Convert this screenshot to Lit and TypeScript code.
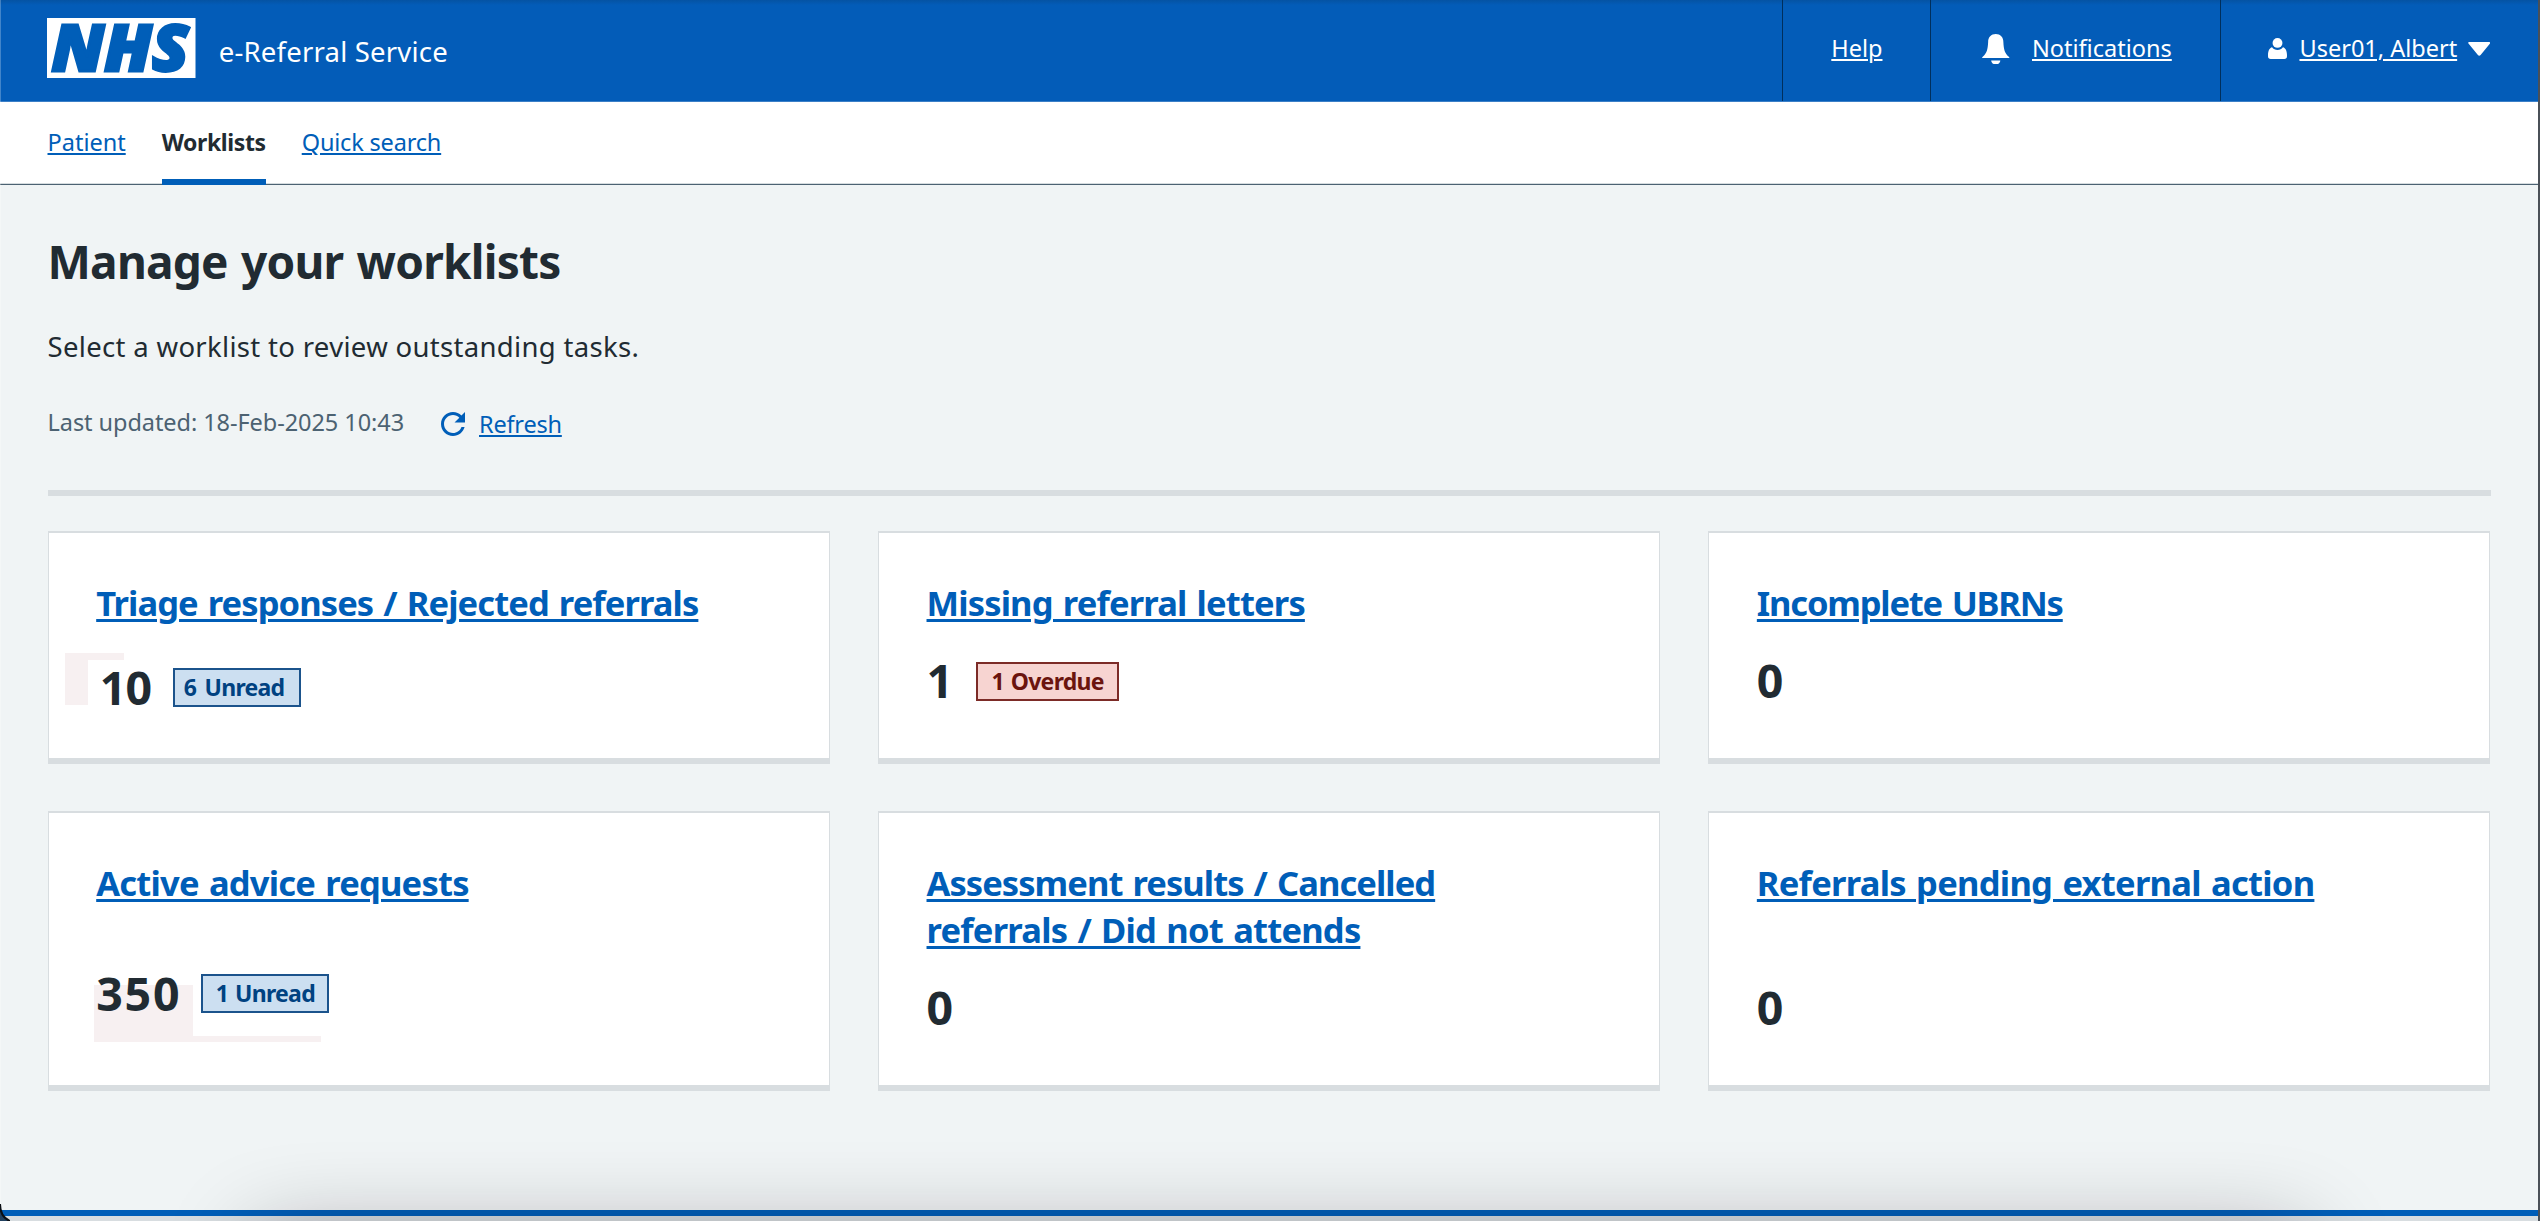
import { LitElement, html, css, svg, nothing } from "lit";
import { customElement, property } from "lit/decorators.js";
import { classMap } from "lit/directives/class-map.js";
import { styleMap } from "lit/directives/style-map.js";

interface Badge {
  label: string;
  kind: "unread" | "overdue";
}

interface Worklist {
  id: string;
  title: string[];
  /* letter-spacing for each title line, in pixels */
  tracking: number[];
  count: number;
  badge?: Badge;
}

const WORKLISTS: Worklist[] = [
  { id: "triage", title: ["Triage responses / Rejected referrals"], tracking: [-0.91], count: 10, badge: { label: "6 Unread", kind: "unread" } },
  { id: "missing", title: ["Missing referral letters"], tracking: [-0.84], count: 1, badge: { label: "1 Overdue", kind: "overdue" } },
  { id: "incomplete", title: ["Incomplete UBRNs"], tracking: [-1.2], count: 0 },
  { id: "advice", title: ["Active advice requests"], tracking: [-0.79], count: 350, badge: { label: "1 Unread", kind: "unread" } },
  { id: "assessment", title: ["Assessment results / Cancelled", "referrals / Did not attends"], tracking: [-0.94, -0.78], count: 0 },
  { id: "pending", title: ["Referrals pending external action"], tracking: [-0.73], count: 0 },
];

@customElement("worklist-card")
export class WorklistCard extends LitElement {
  @property({ attribute: false }) item!: Worklist;

  static styles = css`
    :host {
      display: block;
    }
    .card {
      position: relative;
      box-sizing: border-box;
      height: 100%;
      display: flex;
      flex-direction: column;
      padding: 46px 40px 50px 47.7px;
      background: #fff;
      border: 1px solid #d8dde0;
      border-top-width: 2px;
      border-bottom-width: 6px;
    }
    .title {
      margin: 0;
      font-size: 34.5px;
      line-height: 47px;
      font-weight: 700;
      word-spacing: 2px;
    }
    .link {
      color: #005eb8;
      white-space: nowrap;
      text-decoration: underline;
      text-decoration-thickness: 3px;
      text-underline-offset: 3px;
    }
    .line {
      display: block;
    }
    .row {
      position: relative;
      display: flex;
      align-items: center;
      height: 56px;
      margin-top: auto;
    }
    .count {
      font-size: 46.5px;
      line-height: 56px;
      font-weight: 700;
      color: #212b32;
    }
    .badge {
      box-sizing: border-box;
      width: 128px;
      height: 39px;
      border: 2px solid #1b538c;
      background: #ccdff1;
      color: #004281;
      font-size: 23px;
      line-height: 35px;
      font-weight: 700;
      letter-spacing: -0.7px;
      word-spacing: 1.5px;
      text-align: center;
      white-space: nowrap;
    }
    .overdue {
      width: 142.5px;
      border-color: #7c2b27;
      background: #f7d4d1;
      color: #6b140e;
      margin: 3px 0 0 23.3px;
    }
    .triage .row {
      margin: auto 0 -7px 3.5px;
    }
    .triage .count {
      letter-spacing: -0.8px;
    }
    .triage .badge {
      margin: 0 0 0 21.3px;
      word-spacing: 3px;
      padding-right: 5px;
    }
    .advice .row {
      margin-bottom: 14px;
    }
    .advice .count {
      letter-spacing: 1.8px;
    }
    .advice .badge {
      margin-left: 20px;
    }
    .patch {
      position: absolute;
      background: #f7f0f1;
    }
    .patch-a {
      left: 16px;
      top: 120px;
      width: 23px;
      height: 52px;
    }
    .patch-b {
      left: 16px;
      top: 120px;
      width: 59px;
      height: 7px;
    }
    .patch-c {
      left: 45px;
      top: 172px;
      width: 99px;
      height: 57px;
    }
    .patch-d {
      left: 45px;
      top: 223px;
      width: 227px;
      height: 6px;
    }
  `;

  render() {
    const { id, title, tracking, count, badge } = this.item;
    return html`
      <section class=${classMap({ card: true, [id]: true })}>
        ${id === "triage" ? html`<span class="patch patch-a"></span><span class="patch patch-b"></span>` : nothing}
        ${id === "advice" ? html`<span class="patch patch-c"></span><span class="patch patch-d"></span>` : nothing}
        <h2 class="title">
          ${title.map(
            (t, i) => html`<span class="line"><a class="link" style=${styleMap({ letterSpacing: `${tracking[i]}px` })}>${t}</a></span>`
          )}
        </h2>
        <div class="row">
          <span class="count">${count}</span>
          ${badge ? html`<span class=${classMap({ badge: true, [badge.kind]: true })}>${badge.label}</span>` : nothing}
        </div>
      </section>
    `;
  }
}

const bell = svg`<path d="M40.5 0C27 0 18 9 18 24C17 45 14 57 2 67Q0 69 0 71H81Q81 69 79 67C67 57 64 45 63 24C63 9 54 0 40.5 0Z"/><path d="M27 78H54C54 84 48 90 40.5 90S27 84 27 78Z"/>`;
const person = svg`<circle cx="28" cy="14.5" r="14.5"/><path d="M12 27A19.5 19.5 0 0 0 44 27C52 29 56 38 56 50V54Q56 62 48 62H8Q0 62 0 54V50C0 38 4 29 12 27Z"/>`;
const refresh = svg`<path d="M17.65 6.35C16.2 4.9 14.21 4 12 4c-4.42 0-7.99 3.58-7.99 8s3.57 8 7.99 8c3.73 0 6.84-2.55 7.73-6h-2.08c-.82 2.33-3.04 4-5.65 4-3.31 0-6-2.69-6-6s2.69-6 6-6c1.66 0 3.14.69 4.22 1.78L13 11h7V4l-2.35 2.35z"/>`;

@customElement("app-root")
export class AppRoot extends LitElement {
  static styles = css`
    :host {
      display: block;
      font-family: "Noto Sans", "Open Sans", sans-serif;
      color: #212b32;
    }
    .page {
      position: relative;
      box-sizing: border-box;
      width: 2540px;
      height: 1221px;
      overflow: hidden;
      display: flex;
      flex-direction: column;
      background: #f0f4f5;
    }
    .header {
      flex: none;
      box-sizing: border-box;
      height: 102px;
      display: flex;
      align-items: flex-start;
      background: linear-gradient(#0553a3 0, #035cb8 5px);
      border-bottom: 1px solid #3b7fc7;
      color: #fff;
    }
    .logo {
      width: 148.5px;
      height: 60px;
      margin: 18px 0 0 47px;
      overflow: visible;
    }
    .logo-box {
      fill: #fff;
    }
    .logo-text {
      font-family: "Noto Sans", "Open Sans", sans-serif;
      font-weight: 900;
      font-style: italic;
      font-size: 64.5px;
      fill: #005eb8;
      stroke: #005eb8;
      stroke-width: 2.8px;
    }
    .service {
      margin: 34px auto 0 23.3px;
      font-size: 27.5px;
      line-height: 36px;
      letter-spacing: 0.2px;
    }
    .cell {
      box-sizing: border-box;
      height: 101px;
      padding-top: 31.5px;
      display: flex;
      align-items: flex-start;
      border-left: 1px solid #002f5c;
      font-size: 23.5px;
      line-height: 32px;
      white-space: nowrap;
    }
    .link {
      color: #005eb8;
      text-decoration: underline;
      text-decoration-thickness: 2px;
      text-underline-offset: 2px;
    }
    .cell .link {
      color: #fff;
    }
    .icon {
      display: block;
      flex: none;
      fill: currentColor;
    }
    .help {
      width: 148px;
      padding-left: 48.8px;
    }
    .notifications {
      width: 290.5px;
      padding-left: 51.5px;
    }
    .bell {
      width: 27.5px;
      height: 30.5px;
      margin: 2.2px 22.5px 0 0;
    }
    .user {
      width: 320px;
      padding-left: 47.3px;
    }
    .person {
      width: 19px;
      height: 21px;
      margin: 6px 12.2px 0 0;
    }
    .caret {
      width: 22.5px;
      height: 14px;
      margin: 10px 0 0 10.7px;
    }
    .nav {
      flex: none;
      box-sizing: border-box;
      height: 83px;
      display: flex;
      align-items: stretch;
      gap: 36px;
      padding-left: 47.5px;
      background: #fff;
      border-bottom: 1px solid #4c6272;
      box-shadow: inset 0 -1px #d5dcdf;
      font-size: 23.5px;
      line-height: 32px;
    }
    .tab {
      box-sizing: border-box;
      padding-top: 24.3px;
      height: 83px;
    }
    .current {
      font-size: 23px;
      font-weight: 700;
      letter-spacing: -0.39px;
      border-bottom: 6px solid #005eb8;
    }
    .quick {
      letter-spacing: -0.18px;
    }
    .main {
      flex: 1;
      display: flex;
      flex-direction: column;
      padding: 46px 49.5px 0 47.5px;
    }
    .heading {
      margin: 0;
      font-size: 46px;
      line-height: 60px;
      font-weight: 700;
      letter-spacing: -0.77px;
      word-spacing: 2px;
    }
    .intro {
      margin: 36px 0 0;
      font-size: 27.5px;
      line-height: 40px;
      letter-spacing: 0.32px;
    }
    .status {
      display: flex;
      align-items: flex-start;
      height: 36px;
      margin-top: 37px;
      font-size: 23.5px;
      line-height: 36px;
    }
    .updated {
      width: 393px;
      color: #4c6272;
      letter-spacing: -0.06px;
      white-space: nowrap;
    }
    .refresh {
      width: 24px;
      height: 24px;
      margin: 8px 14.5px 0 0;
      color: #005eb8;
    }
    .reload {
      margin-top: 1.5px;
      letter-spacing: -0.2px;
    }
    .rule {
      height: 6px;
      margin-top: 50px;
      background: #d8dde0;
    }
    .grid {
      display: grid;
      grid-template-columns: repeat(3, 1fr);
      grid-template-rows: 233px 280px;
      gap: 47px 48px;
      margin-top: 35px;
    }
    .footer {
      flex: none;
      box-sizing: border-box;
      height: 11px;
      background: #d8dde0;
      border-top: 6px solid #005eb8;
    }
    .shade {
      position: absolute;
      left: 255px;
      top: 1236px;
      width: 2050px;
      height: 200px;
      box-shadow: 0 0 90px rgba(20, 10, 20, 0.32);
    }
    .edge-left {
      position: absolute;
      left: 0;
      top: 0;
      width: 1px;
      height: 1205px;
      background: rgba(255, 255, 255, 0.25);
    }
    .edge-right {
      position: absolute;
      right: 0;
      top: 0;
      width: 2px;
      height: 1221px;
      background: #4a5057;
    }
    .corner {
      position: absolute;
      left: 0;
      bottom: 0;
      width: 10px;
      height: 17px;
    }
  `;

  render() {
    return html`
      <div class="page">
        <header class="header">
          <svg class="logo" viewBox="0 0 148.5 60">
            <rect class="logo-box" width="148.5" height="60"></rect>
            <text class="logo-text" x="4.5" y="53" textLength="137" lengthAdjust="spacingAndGlyphs">NHS</text>
          </svg>
          <span class="service">e-Referral Service</span>
          <div class="cell help"><a class="link">Help</a></div>
          <div class="cell notifications">
            <svg class="icon bell" viewBox="0 0 81 90">${bell}</svg>
            <a class="link">Notifications</a>
          </div>
          <div class="cell user">
            <svg class="icon person" viewBox="0 0 56 62">${person}</svg>
            <a class="link">User01, Albert</a>
            <svg class="icon caret" viewBox="0 0 66 41">
              <path d="M4 0H62Q68 1 64 5L37 38Q33 42 29 38L2 5Q-2 1 4 0Z"></path>
            </svg>
          </div>
        </header>
        <nav class="nav">
          <div class="tab"><a class="link">Patient</a></div>
          <div class="tab current">Worklists</div>
          <div class="tab quick"><a class="link">Quick search</a></div>
        </nav>
        <main class="main">
          <h1 class="heading">Manage your worklists</h1>
          <p class="intro">Select a worklist to review outstanding tasks.</p>
          <div class="status">
            <span class="updated">Last updated: 18-Feb-2025 10:43</span>
            <svg class="icon refresh" viewBox="4 4 16 16">${refresh}</svg>
            <a class="link reload">Refresh</a>
          </div>
          <div class="rule"></div>
          <div class="grid">${WORKLISTS.map((w) => html`<worklist-card .item=${w}></worklist-card>`)}</div>
        </main>
        <footer class="footer"></footer>
        <div class="shade"></div>
        <div class="edge-left"></div>
        <div class="edge-right"></div>
        <svg class="corner" viewBox="0 0 10 17">
          <path d="M0 0C0 8 3 14 10 17H0Z" fill="#23425f"></path>
          <path d="M0 0C0 8 3 14 10 17" fill="none" stroke="#0b0f14" stroke-width="2"></path>
        </svg>
      </div>
    `;
  }
}
